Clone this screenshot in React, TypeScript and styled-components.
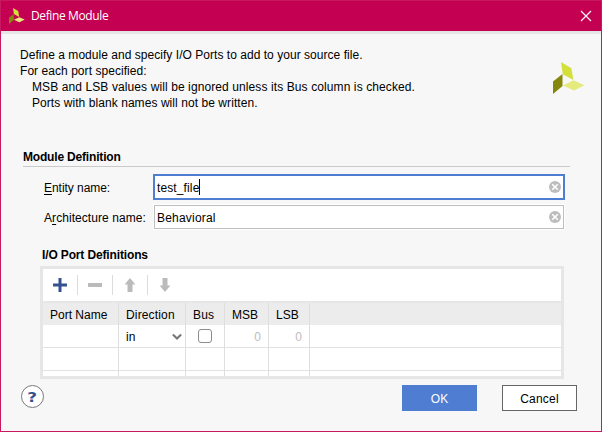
import React from "react";
import styled, { createGlobalStyle } from "styled-components";

const GlobalStyle = createGlobalStyle`
  * { box-sizing: border-box; }
  body { margin: 0; overflow: hidden; }
`;

const Dialog = styled.div`
  width: 602px;
  height: 432px;
  display: flex;
  flex-direction: column;
  background: #f7f7f7;
  border: 1px solid #c8195f;
  font: 12px/16px "Liberation Sans", Arial, sans-serif;
  color: #000;
`;

const TitleBar = styled.header`
  height: 30px;
  flex: none;
  display: flex;
  align-items: center;
  background: #c40052;
  padding: 0 9px 0 8px;
`;

const TitleText = styled.h1`
  flex: 1;
  margin: 0 0 0 6px;
  font: 400 12px/16px "Open Sans", "Noto Sans", sans-serif;
  letter-spacing: -0.38px;
  color: #fff;
`;

const Strip = styled.div`
  height: 3px;
  flex: none;
  background: #e6e6e6;
`;

const Intro = styled.section`
  height: 114px;
  flex: none;
  display: flex;
  justify-content: space-between;
  align-items: flex-start;
  padding: 13px 16px 0 19px;
`;

const IntroLogo = styled.div`
  display: flex;
  margin-top: 15px;
`;

const Line = styled.p<{ $indent?: boolean; $track?: number }>`
  margin: 0;
  padding-left: ${(p) => (p.$indent ? 12 : 0)}px;
  letter-spacing: ${(p) => p.$track ?? 0}px;
  white-space: nowrap;
`;

const Heading = styled.h2<{ $track?: number }>`
  margin: 0;
  font-size: 12px;
  line-height: 16px;
  font-weight: 700;
  letter-spacing: ${(p) => p.$track ?? 0}px;
`;

const ModuleHeader = styled.div`
  height: 19px;
  flex: none;
  margin: 0 31px 0 22px;
  padding-top: 1px;
  border-bottom: 1px solid #cacaca;
`;

const Form = styled.div`
  height: 63px;
  flex: none;
  display: flex;
  flex-direction: column;
  gap: 4px;
  padding: 7px 36px 0 43px;
`;

const FormRow = styled.label`
  height: 26px;
  display: grid;
  grid-template-columns: 109px 412px;
  align-items: center;
`;

const LabelText = styled.span<{ $track?: number }>`
  padding-top: 2px;
  letter-spacing: ${(p) => p.$track ?? 0}px;
  white-space: nowrap;
`;

const Mnemonic = styled.span`
  text-decoration: underline;
  text-underline-offset: 2px;
  text-decoration-thickness: 1px;
  text-decoration-skip-ink: none;
`;

const Field = styled.span<{ $focused?: boolean }>`
  height: ${(p) => (p.$focused ? 26 : 24)}px;
  margin: ${(p) => (p.$focused ? "0" : "0 1px")};
  padding: 0 2px;
  display: flex;
  align-items: center;
  justify-content: space-between;
  background: #fff;
  border: ${(p) => (p.$focused ? "2px solid #4e7dd1" : "1px solid #bebebe")};
  box-shadow: ${(p) => (p.$focused ? "none" : "0 0 0 1px #fff")};
`;

const Value = styled.span<{ $track?: number }>`
  display: flex;
  align-items: center;
  padding-top: 2px;
  letter-spacing: ${(p) => p.$track ?? 0}px;
`;

const Caret = styled.i`
  width: 1px;
  height: 16px;
  margin-top: -2px;
  background: #000;
`;

const Ports = styled.section`
  width: 524px;
  height: 149px;
  flex: none;
  margin-left: 39px;
`;

const PortsTitle = styled.div`
  height: 36px;
  padding: 17px 0 0 2px;
`;

const Panel = styled.div`
  height: 113px;
  border: 3px solid #e6e6e6;
  background: #fff;
  overflow: hidden;
`;

const Toolbar = styled.div`
  height: 34px;
  display: flex;
  align-items: center;
  border-bottom: 2px solid #e6e6e6;
`;

const ToolButton = styled.button`
  width: 34px;
  height: 32px;
  padding: 0;
  display: grid;
  place-items: center;
  border: 0;
  background: none;
`;

const Separator = styled.i`
  width: 1px;
  height: 20px;
  background: #dcdcdc;
`;

const GridRow = styled.div<{ $header?: boolean }>`
  height: ${(p) => (p.$header ? 22 : 23)}px;
  display: grid;
  grid-template-columns: 76px 67px 39px 44px 41px 1fr;
  background: ${(p) => (p.$header ? "#ececec" : "#fff")};
  border-bottom: ${(p) => (p.$header ? "0" : "1px solid #e2e2e2")};
`;

const Cell = styled.div<{ $align?: string; $muted?: boolean; $track?: number }>`
  display: flex;
  align-items: center;
  justify-content: ${(p) => p.$align ?? "flex-start"};
  padding: 1px ${(p) => (p.$muted ? 7 : 2)}px 0 7px;
  border-right: 1px solid #dedede;
  color: ${(p) => (p.$muted ? "#bdbdbd" : "#000")};
  letter-spacing: ${(p) => p.$track ?? 0}px;
  white-space: nowrap;
  &:last-child { border-right: 0; }
`;

const Checkbox = styled.span`
  width: 14px;
  height: 14px;
  margin: -2px 6px 0 0;
  border: 1px solid #8c8c8c;
  border-radius: 3px;
  background: #fff;
`;

const Footer = styled.footer`
  height: 32px;
  flex: none;
  display: flex;
  align-items: flex-end;
  padding: 0 24px 0 20px;
`;

const HelpButton = styled.button`
  width: 23px;
  height: 23px;
  margin: 0 auto 3px 0;
  padding: 1px 0 0;
  display: grid;
  place-items: center;
  border: 1px solid #777;
  border-radius: 50%;
  background: #fff;
  color: #33508c;
  font: 700 14px/20px "DejaVu Sans", sans-serif;
`;

const HelpMark = styled.span`
  transform: scaleX(1.2);
`;

const Button = styled.button<{ $primary?: boolean; $track?: number }>`
  width: 75px;
  height: 26px;
  margin-left: ${(p) => (p.$primary ? 0 : 25)}px;
  padding: 1px 0 0;
  font: 12px/16px "Liberation Sans", Arial, sans-serif;
  letter-spacing: ${(p) => p.$track ?? 0}px;
  border: 1px solid ${(p) => (p.$primary ? "#4e7dd1" : "#666")};
  background: ${(p) => (p.$primary ? "#4e7dd1" : "#fff")};
  color: ${(p) => (p.$primary ? "#fff" : "#000")};
`;

const Logo = ({ size }: { size: number }) => (
  <svg width={size} height={size} viewBox="0 0 32 32">
    <path d="M8 0 L18.4 6.2 L20.4 18 L9.8 12.2 Z" fill="#d4e03a" />
    <path d="M0 19.5 L9.5 12 V24 L0 32 Z" fill="#848709" />
    <path d="M10 23.5 L20.5 18.3 L31.5 23.2 L21 28.5 Z" fill="#e4ea7c" />
  </svg>
);

const ClearIcon = () => (
  <svg width="12" height="12" viewBox="0 0 12 12">
    <circle cx="6" cy="6" r="6" fill="#bdbdbd" />
    <path d="M3.2 3.2 L8.8 8.8 M8.8 3.2 L3.2 8.8" stroke="#fff" strokeWidth="1.6" />
  </svg>
);

const ArrowIcon = ({ down }: { down?: boolean }) => (
  <svg width="14" height="14" viewBox="0 0 14 14">
    <path
      d={down ? "M4.5 0 H9.5 V7.5 H12.4 L7 14 L1.6 7.5 H4.5 Z" : "M4.5 14 H9.5 V6.5 H12.4 L7 0 L1.6 6.5 H4.5 Z"}
      fill="#bbb"
    />
  </svg>
);

export default function App() {
  return (
    <Dialog>
      <GlobalStyle />
      <TitleBar>
        <Logo size={16} />
        <TitleText>Define Module</TitleText>
        <svg width="12" height="12" viewBox="0 0 12 12">
          <path d="M1 1 L11 11 M11 1 L1 11" stroke="#fff" strokeWidth="1.1" />
        </svg>
      </TitleBar>
      <Strip />
      <Intro>
        <div>
          <Line $track={0.036}>Define a module and specify I/O Ports to add to your source file.</Line>
          <Line $track={0.05}>For each port specified:</Line>
          <Line $indent $track={0.1}>MSB and LSB values will be ignored unless its Bus column is checked.</Line>
          <Line $indent $track={0.065}>Ports with blank names will not be written.</Line>
        </div>
        <IntroLogo>
          <Logo size={32} />
        </IntroLogo>
      </Intro>
      <ModuleHeader>
        <Heading $track={-0.18}>Module Definition</Heading>
      </ModuleHeader>
      <Form>
        <FormRow>
          <LabelText $track={-0.05}><Mnemonic>E</Mnemonic>ntity name:</LabelText>
          <Field $focused>
            <Value $track={0.12}>test_file<Caret /></Value>
            <ClearIcon />
          </Field>
        </FormRow>
        <FormRow>
          <LabelText $track={0.06}>A<Mnemonic>r</Mnemonic>chitecture name:</LabelText>
          <Field>
            <Value $track={0.2}>Behavioral</Value>
            <ClearIcon />
          </Field>
        </FormRow>
      </Form>
      <Ports>
        <PortsTitle>
          <Heading $track={-0.14}>I/O Port Definitions</Heading>
        </PortsTitle>
        <Panel>
          <Toolbar>
            <ToolButton aria-label="Add">
              <svg width="14" height="14" viewBox="0 0 14 14">
                <path d="M7 0 V14 M0 7 H14" stroke="#35528f" strokeWidth="3" />
              </svg>
            </ToolButton>
            <Separator />
            <ToolButton aria-label="Remove">
              <svg width="14" height="14" viewBox="0 0 14 14">
                <path d="M0 7 H14" stroke="#bbb" strokeWidth="4" />
              </svg>
            </ToolButton>
            <Separator />
            <ToolButton aria-label="Move up"><ArrowIcon /></ToolButton>
            <Separator />
            <ToolButton aria-label="Move down"><ArrowIcon down /></ToolButton>
          </Toolbar>
          <GridRow $header>
            <Cell>Port Name</Cell>
            <Cell $track={0.15}>Direction</Cell>
            <Cell $track={0.15}>Bus</Cell>
            <Cell>MSB</Cell>
            <Cell>LSB</Cell>
            <Cell />
          </GridRow>
          <GridRow>
            <Cell />
            <Cell $align="space-between">
              in
              <svg width="12" height="8" viewBox="0 0 12 8">
                <path d="M1.9 1.5 L6 5.6 L10.1 1.5" fill="none" stroke="#777" strokeWidth="2.1" />
              </svg>
            </Cell>
            <Cell $align="center"><Checkbox /></Cell>
            <Cell $align="flex-end" $muted>0</Cell>
            <Cell $align="flex-end" $muted>0</Cell>
            <Cell />
          </GridRow>
          {[0, 1].map((row) => (
            <GridRow key={row}>
              <Cell /><Cell /><Cell /><Cell /><Cell /><Cell />
            </GridRow>
          ))}
        </Panel>
      </Ports>
      <Footer>
        <HelpButton aria-label="Help"><HelpMark>?</HelpMark></HelpButton>
        <Button $primary>OK</Button>
        <Button $track={0.2}>Cancel</Button>
      </Footer>
    </Dialog>
  );
}
